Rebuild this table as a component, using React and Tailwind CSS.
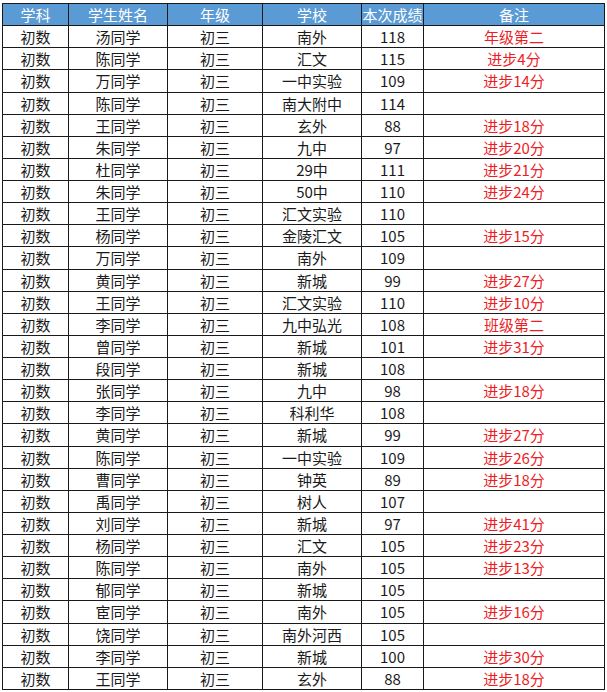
import React from "react";

const rows = [
  ["汤同学", "南外", "118", "年级第二"],
  ["陈同学", "汇文", "115", "进步4分"],
  ["万同学", "一中实验", "109", "进步14分"],
  ["陈同学", "南大附中", "114", ""],
  ["王同学", "玄外", "88", "进步18分"],
  ["朱同学", "九中", "97", "进步20分"],
  ["杜同学", "29中", "111", "进步21分"],
  ["朱同学", "50中", "110", "进步24分"],
  ["王同学", "汇文实验", "110", ""],
  ["杨同学", "金陵汇文", "105", "进步15分"],
  ["万同学", "南外", "109", ""],
  ["黄同学", "新城", "99", "进步27分"],
  ["王同学", "汇文实验", "110", "进步10分"],
  ["李同学", "九中弘光", "108", "班级第二"],
  ["曾同学", "新城", "101", "进步31分"],
  ["段同学", "新城", "108", ""],
  ["张同学", "九中", "98", "进步18分"],
  ["李同学", "科利华", "108", ""],
  ["黄同学", "新城", "99", "进步27分"],
  ["陈同学", "一中实验", "109", "进步26分"],
  ["曹同学", "钟英", "89", "进步18分"],
  ["禹同学", "树人", "107", ""],
  ["刘同学", "新城", "97", "进步41分"],
  ["杨同学", "汇文", "105", "进步23分"],
  ["陈同学", "南外", "105", "进步13分"],
  ["郁同学", "新城", "105", ""],
  ["宦同学", "南外", "105", "进步16分"],
  ["饶同学", "南外河西", "105", ""],
  ["李同学", "新城", "100", "进步30分"],
  ["王同学", "玄外", "88", "进步18分"],
];

const headers = ["学科", "学生姓名", "年级", "学校", "本次成绩", "备注"];

export default function App() {
  return (
    <div
      className="bg-white w-[607px] h-[692px] pl-[2px] pt-[3px]"
      style={{ fontFamily: '"Noto Sans CJK SC", "Noto Sans", sans-serif' }}
    >
      <table className="border-collapse table-fixed w-[603px] text-[15px] leading-none text-[#1a1a1a]">
        <colgroup>
          <col className="w-[66px]" />
          <col className="w-[99px]" />
          <col className="w-[95px]" />
          <col className="w-[99px]" />
          <col className="w-[62px]" />
          <col className="w-[181px]" />
        </colgroup>
        <thead>
          <tr className="h-[22.13px] bg-[#5b9bd5] text-white">
            {headers.map((h) => (
              <th key={h} className="border border-[#1a1a1a] font-normal text-center p-0 align-middle">
                {h}
              </th>
            ))}
          </tr>
        </thead>
        <tbody>
          {rows.map((r, i) => (
            <tr key={i} className="h-[22.13px]">
              <td className="border border-[#1a1a1a] text-center p-0 align-middle">初数</td>
              <td className="border border-[#1a1a1a] text-center p-0 align-middle">{r[0]}</td>
              <td className="border border-[#1a1a1a] text-center p-0 align-middle">初三</td>
              <td className="border border-[#1a1a1a] text-center p-0 align-middle">{r[1]}</td>
              <td className="border border-[#1a1a1a] text-center p-0 align-middle">{r[2]}</td>
              <td className="border border-[#1a1a1a] text-center p-0 align-middle text-[#ee1c24]">{r[3]}</td>
            </tr>
          ))}
        </tbody>
      </table>
    </div>
  );
}
